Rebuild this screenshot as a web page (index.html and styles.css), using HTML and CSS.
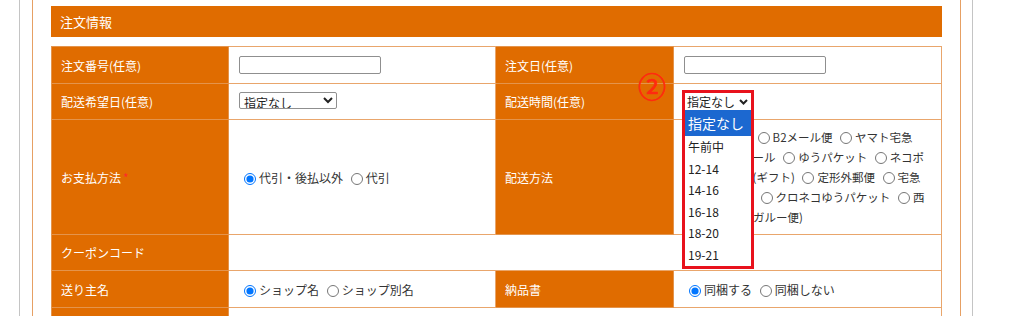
FILE: index.html
```html
<!DOCTYPE html>
<html lang="ja">
<head>
  <meta charset="UTF-8" />
  <title>注文情報</title>
  <link rel="stylesheet" href="styles.css">
</head>
<body>
  <div class="page">
    <div class="frame">
      <h3 class="section-title">注文情報</h3>

      <table class="order-table">
        <colgroup>
          <col class="col-label">
          <col class="col-value">
          <col class="col-label2">
          <col>
        </colgroup>
        <tr class="row-a">
          <th>注文番号(任意)</th>
          <td><input type="text" class="text-input" /></td>
          <th>注文日(任意)</th>
          <td><input type="text" class="text-input" /></td>
        </tr>
        <tr class="row-b">
          <th>配送希望日(任意)</th>
          <td>
            <select class="date-select">
              <option>指定なし</option>
            </select>
          </td>
          <th class="mark-cell">配送時間(任意)<span class="step-mark">②</span></th>
          <td class="time-cell">
            <!-- 開いた状態のプルダウン -->
            <div class="time-picker">
              <div class="time-current">
                指定なし
                <svg class="chevron" width="9" height="6" viewBox="0 0 9 6"><path d="M1 1 L4.5 4.5 L8 1" fill="none" stroke="#222" stroke-width="2"/></svg>
              </div>
              <ul class="time-list">
                <li class="selected">指定なし</li>
                <li>午前中</li>
                <li>12-14</li>
                <li>14-16</li>
                <li>16-18</li>
                <li>18-20</li>
                <li>19-21</li>
              </ul>
            </div>
          </td>
        </tr>
        <tr class="row-c">
          <th>お支払方法<span class="required">*</span></th>
          <td>
            <label><input type="radio" name="pay" checked />代引・後払以外</label>
            <label><input type="radio" name="pay" />代引</label>
          </td>
          <th>配送方法</th>
          <td class="ship-cell">
            <label><input type="radio" name="ship" />普通郵便</label>
            <label><input type="radio" name="ship" />B2メール便</label>
            <label><input type="radio" name="ship" />ヤマト宅急<br>便</label>
            <label><input type="radio" name="ship" />ゆうメール</label>
            <label><input type="radio" name="ship" />ゆうパケット</label>
            <label><input type="radio" name="ship" />ネコポ<br>ス</label>
            <label><input type="radio" name="ship" />宅急便(ギフト)</label>
            <label><input type="radio" name="ship" />定形外郵便</label>
            <label><input type="radio" name="ship" />宅急<br>便コンパクト</label>
            <label><input type="radio" name="ship" />クロネコゆうパケット</label>
            <label><input type="radio" name="ship" />西<br>濃運輸（カンガルー便)</label>
          </td>
        </tr>
        <tr class="row-b">
          <th>クーポンコード</th>
          <td colspan="3"></td>
        </tr>
        <tr class="row-a">
          <th>送り主名</th>
          <td>
            <label><input type="radio" name="sender" checked />ショップ名</label>
            <label><input type="radio" name="sender" />ショップ別名</label>
          </td>
          <th>納品書</th>
          <td>
            <label><input type="radio" name="slip" checked />同梱する</label>
            <label><input type="radio" name="slip" />同梱しない</label>
          </td>
        </tr>
        <tr class="row-d">
          <th></th>
          <td colspan="3"></td>
        </tr>
      </table>
    </div>
  </div>
</body>
</html>
```

FILE: styles.css
```css
body, html {
  margin: 0;
  padding: 0;
  background-color: #ffffff;
  font-family: "Noto Sans CJK JP", "Noto Sans", sans-serif;
  font-size: 12px;
  color: #333333;
}

.page {
  margin-left: 19px;
  width: 952px;
  min-height: 316px;
  border-left: 1px solid #c4c4c4;
  border-right: 1px solid #c4c4c4;
}

.frame {
  margin: 0 11px 0 12px;
  padding: 6px 18px 0;
  min-height: 310px;
  border-left: 1px solid #e6a064;
  border-right: 1px solid #e6a064;
}

.section-title {
  margin: 0 0 9px;
  height: 31px;
  line-height: 31px;
  padding-left: 9px;
  background-color: #e06c00;
  color: white;
  font-size: 13px;
  font-weight: normal;
}

.order-table {
  width: 100%;
  border-collapse: collapse;
  table-layout: fixed;
}

.col-label {
  width: 177px;
}

.col-value {
  width: 267px;
}

.col-label2 {
  width: 178px;
}

.order-table th,
.order-table td {
  border: 1px solid #e9a66c;
  vertical-align: middle;
}

.order-table th {
  padding: 0 9px;
  background-color: #e06c00;
  color: white;
  font-weight: normal;
  text-align: left;
  border-color: #e4944c;
}

.order-table td {
  padding: 0 10px;
  background-color: white;
}

.row-a {
  height: 37px;
}

.row-b {
  height: 36px;
}

.row-c {
  height: 115px;
}

.row-d {
  height: 40px;
}

.text-input {
  box-sizing: border-box;
  width: 142px;
  height: 18px;
  margin: 0;
  border: 1px solid #8f8f8f;
  border-radius: 2px;
}

.date-select {
  box-sizing: border-box;
  width: 98px;
  height: 17px;
  padding: 0;
  font-family: inherit;
  font-size: 12px;
  color: #222;
  border: 1px solid #8f8f8f;
  border-radius: 2px;
  background: white;
}

.order-table input[type="radio"] {
  width: 12px;
  height: 12px;
  margin: 0 3px 0 5px;
  vertical-align: -2px;
}

.ship-cell {
  line-height: 20px;
  font-size: 11.5px;
}

.required {
  color: #ff2a2a;
  margin-left: 2px;
}

.mark-cell,
.time-cell {
  position: relative;
}

.step-mark {
  position: absolute;
  top: -12px;
  right: 7px;
  color: #ff2a10;
  font-size: 28px;
  line-height: 28px;
  -webkit-text-stroke: 0.7px #ff2a10;
}

.time-picker {
  position: absolute;
  left: 8px;
  top: 6px;
  z-index: 2;
  width: 66px;
  border: 3px solid #e8121c;
  background-color: white;
}

.time-current {
  display: flex;
  align-items: center;
  justify-content: space-between;
  height: 17px;
  padding: 0 3px 0 2px;
  color: #222;
  font-size: 12px;
}

.time-list {
  list-style: none;
  margin: 0;
  padding: 0;
}

.time-list li {
  height: 21.6px;
  line-height: 22px;
  padding-left: 3px;
  color: #222;
  font-size: 12px;
}

.time-list li.selected {
  height: 26px;
  line-height: 26px;
  background-color: #1c68d0;
  color: white;
  font-size: 14px;
}
```
